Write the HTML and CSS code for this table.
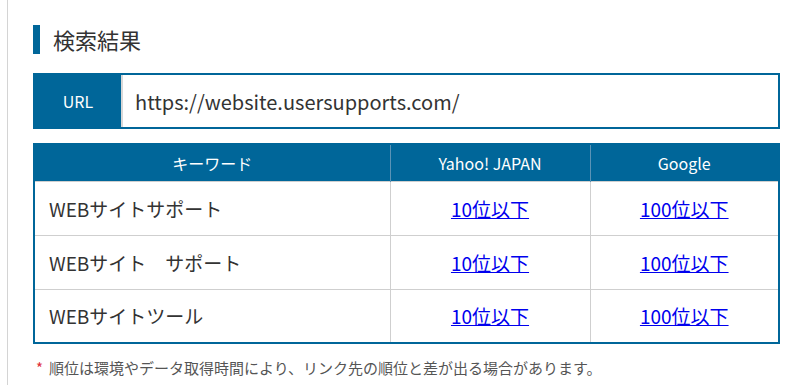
FILE: index.html
```html
<!DOCTYPE html>
<html>
  <head>
    <meta charset="utf-8">
    <title>検索結果</title>
    <link rel="stylesheet" href="styles.css">
  </head>
  <body>
    <div class="page">
      <h2 class="title">検索結果</h2>
      <div class="url-box">
        <div class="url-label">URL</div>
        <div class="url-value">https://website.usersupports.com/</div>
      </div>
      <table class="rank">
        <thead>
          <tr>
            <th class="col-keyword">キーワード</th>
            <th class="col-yahoo">Yahoo! JAPAN</th>
            <th>Google</th>
          </tr>
        </thead>
        <tbody>
          <tr>
            <td>WEBサイトサポート</td>
            <td class="num"><a href="#">10位以下</a></td>
            <td class="num"><a href="#">100位以下</a></td>
          </tr>
          <tr>
            <td>WEBサイト　サポート</td>
            <td class="num"><a href="#">10位以下</a></td>
            <td class="num"><a href="#">100位以下</a></td>
          </tr>
          <tr>
            <td>WEBサイトツール</td>
            <td class="num"><a href="#">10位以下</a></td>
            <td class="num"><a href="#">100位以下</a></td>
          </tr>
        </tbody>
      </table>
      <p class="note"><span class="mark">*</span>順位は環境やデータ取得時間により、リンク先の順位と差が出る場合があります。</p>
    </div>
  </body>
</html>
```

FILE: styles.css
```css
* {
  box-sizing: border-box;
}

body {
  margin: 0;
  padding: 0;
  background-color: #fff;
  color: #333;
  font-family: "Noto Sans CJK JP", "Noto Sans", sans-serif;
}

.page {
  margin-left: 7px;
  border-left: 1px solid #d4d4d4;
  min-height: 385px;
  padding: 25px 8px 0 25px;
}

.title {
  margin: 0 0 19px;
  border-left: 7px solid #006699;
  padding-left: 13px;
  font-size: 22px;
  font-weight: normal;
  line-height: 29px;
}

.url-box {
  display: flex;
  height: 56px;
  border: 2px solid #006699;
}

.url-label {
  width: 86px;
  background-color: #006699;
  color: #fff;
  font-size: 16px;
  display: flex;
  align-items: center;
  justify-content: center;
}

.url-value {
  flex: 1;
  border-left: 2px solid #d8d8d8;
  padding-left: 12px;
  display: flex;
  align-items: center;
  font-size: 20px;
  color: #333;
}

.rank {
  width: 100%;
  margin-top: 14px;
  border-collapse: collapse;
  border: 2px solid #006699;
}

.rank th {
  background-color: #006699;
  color: #fff;
  font-size: 16px;
  font-weight: normal;
  height: 37px;
  border-left: 1px solid #5a93b6;
}

.rank th:first-child {
  border-left: none;
}

.col-keyword {
  width: 356px;
}

.col-yahoo {
  width: 200px;
}

.rank td {
  height: 54px;
  border: 1px solid #cfcfcf;
  padding: 0 0 0 14px;
  font-size: 19px;
}

.rank td.num {
  text-align: center;
  padding: 0;
}

.rank a {
  color: #0000ee;
  text-decoration: underline;
}

.note {
  margin: 13px 0 0 3px;
  font-size: 15px;
  color: #555;
}

.mark {
  color: #e0303a;
  margin-right: 6px;
}
```
